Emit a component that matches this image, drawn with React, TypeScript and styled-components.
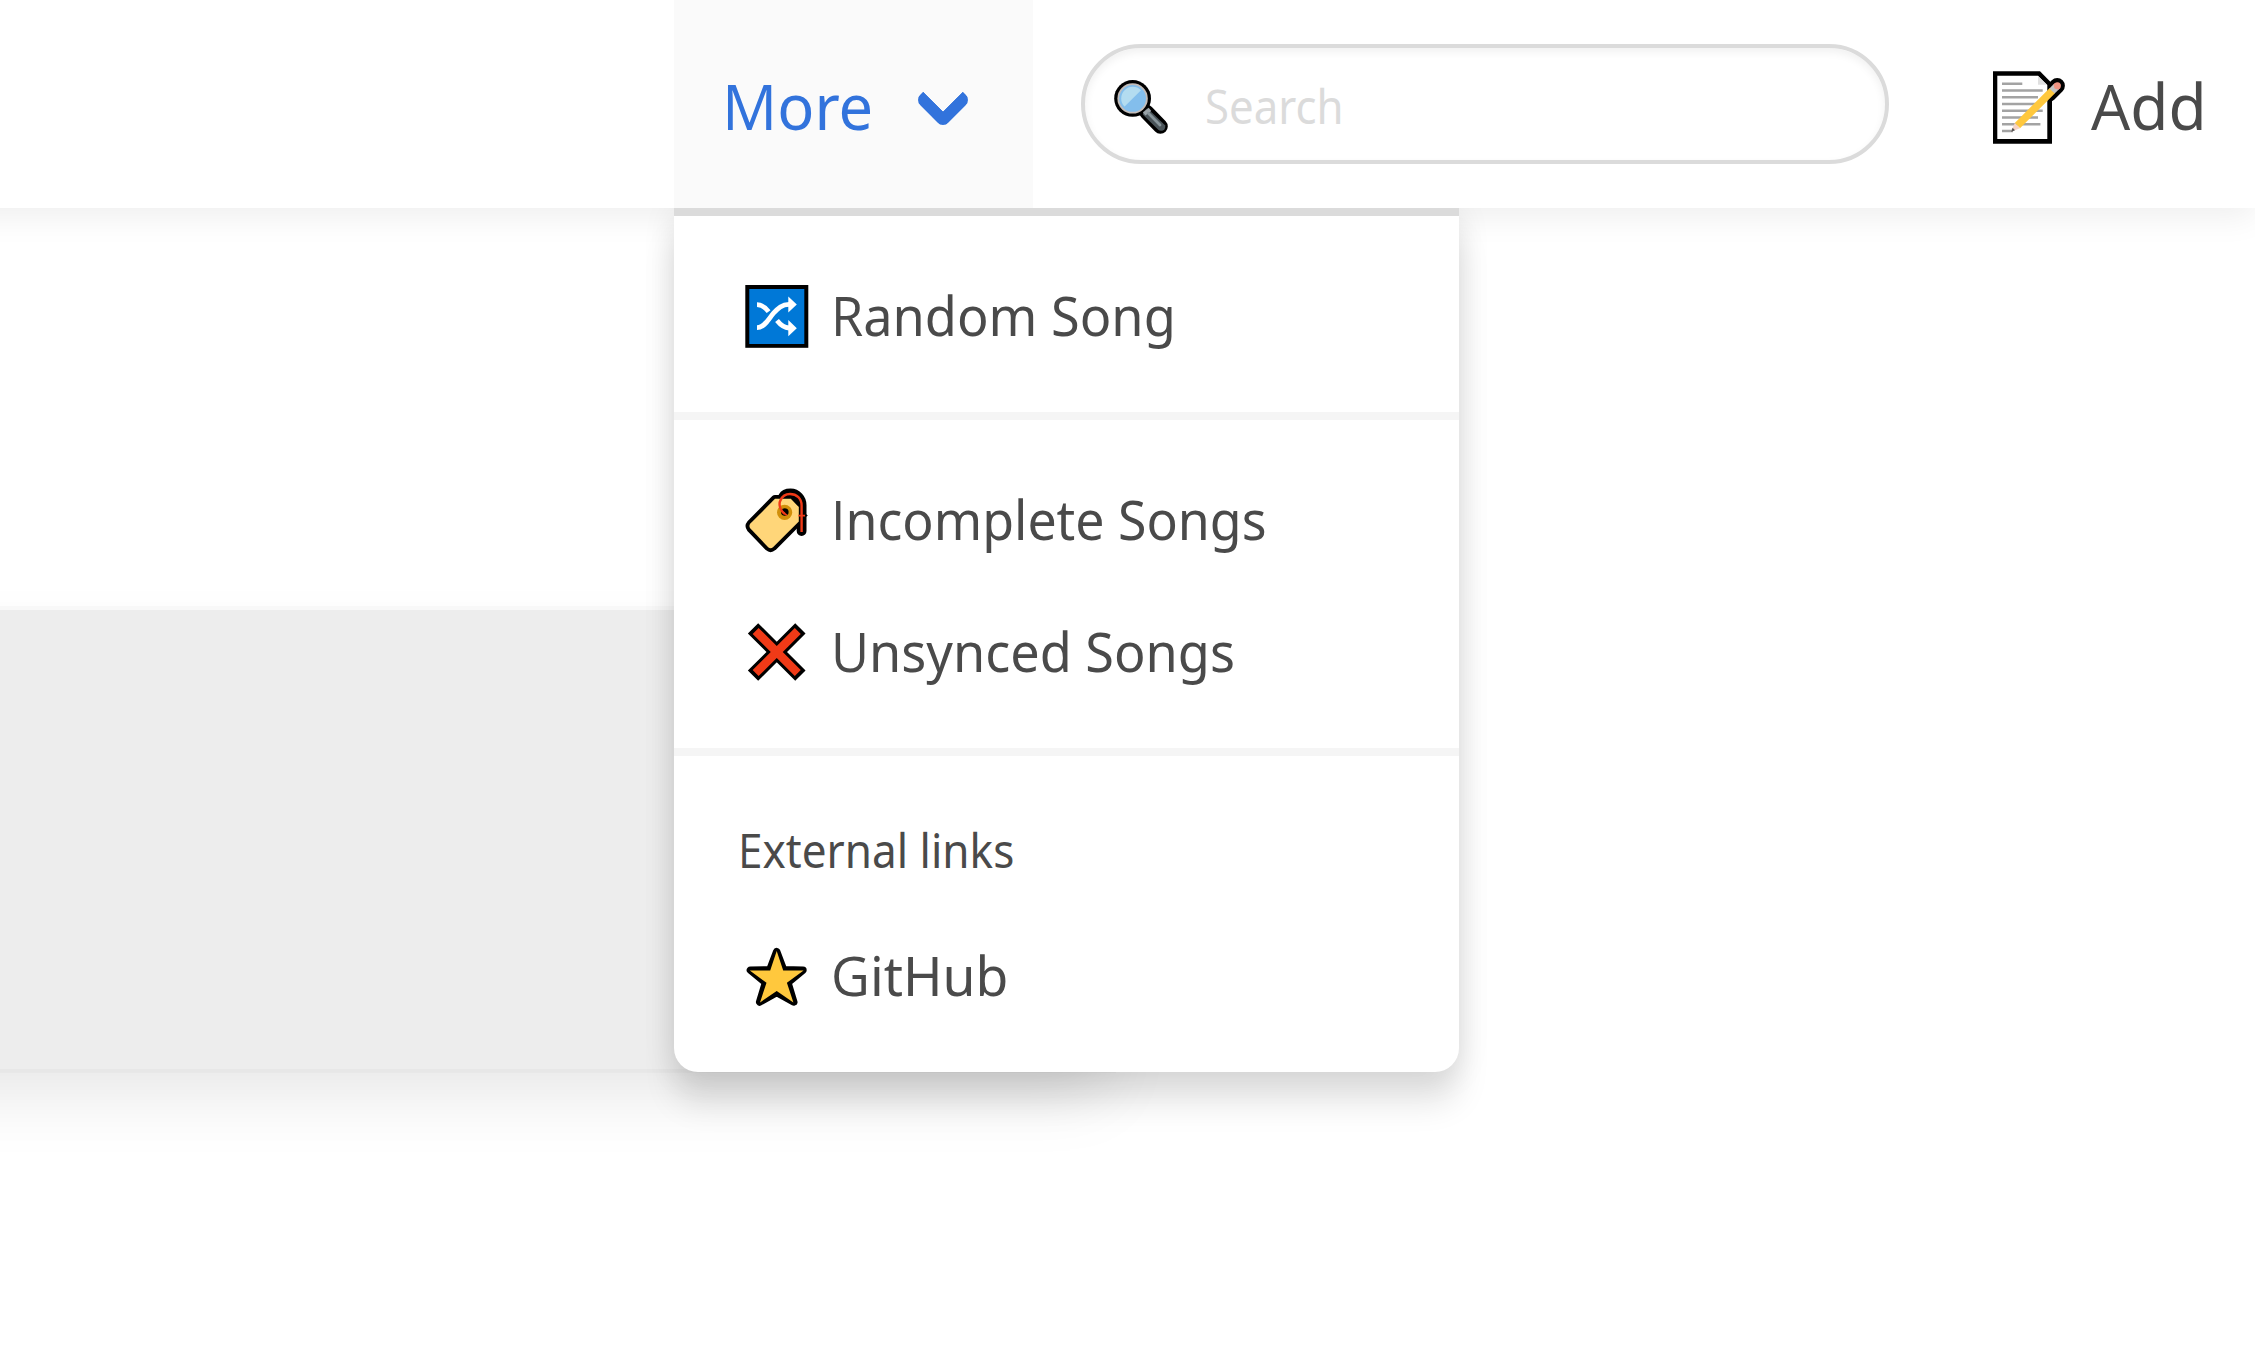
import React from "react";
import styled, { createGlobalStyle } from "styled-components";

const GlobalStyle = createGlobalStyle`
  *, *::before, *::after { box-sizing: border-box; }
  html, body { margin: 0; padding: 0; background: #fff; overflow: hidden; }
  body {
    color: #4a4a4a;
    font-family: "Noto Sans", "Open Sans", sans-serif;
    font-size: 63px;
  }
  svg { display: block; flex: none; }
`;

const Page = styled.div`
  display: flex;
  flex-direction: column;
  min-height: 1371px;
  overflow: hidden;
`;

const Navbar = styled.nav`
  position: relative;
  z-index: 2;
  display: flex;
  align-items: stretch;
  height: 208px;
  margin-left: -100px;
  padding-left: 774px;
  background: #fff;
  box-shadow: 0 8px 32px rgba(10, 10, 10, 0.07);
`;

const Text = styled.span<{ $size: number; $stretch: number; $drop?: number }>`
  display: inline-block;
  white-space: nowrap;
  font-size: ${(p) => p.$size}px;
  line-height: 1.3;
  padding-top: ${(p) => p.$drop ?? 2}px;
  transform: scaleX(${(p) => p.$stretch});
  transform-origin: left center;

  &::first-letter {
    font-family: "Open Sans", sans-serif;
  }
`;

const MoreLink = styled.div`
  position: relative;
  display: flex;
  align-items: center;
  justify-content: space-between;
  width: 358.6px;
  padding: 0 70px 0 48px;
  background: #fafafa;
  color: #3273dc;
`;

const Arrow = styled.span`
  width: 40px;
  height: 40px;
  margin-top: -8px;
  border: 12px solid #3273dc;
  border-top: 0;
  border-right: 0;
  border-radius: 8px;
  transform: rotate(-45deg);
`;

const Dropdown = styled.div`
  position: absolute;
  top: 100%;
  left: 0;
  width: 785px;
  padding: 32px 0;
  background: #fff;
  color: #4a4a4a;
  border-top: 8px solid #dbdbdb;
  border-radius: 0 0 24px 24px;
  box-shadow: 0 32px 32px rgba(10, 10, 10, 0.1), 0 4px 32px rgba(10, 10, 10, 0.1);
  clip-path: inset(0 -80px -120px -80px);
`;

const MenuItem = styled.div`
  display: flex;
  align-items: center;
  gap: 16px;
  height: 132px;
  padding: 0 64px;

  svg { margin-top: 5px; }
`;

const MenuHeading = styled(MenuItem)`
  height: 120px;
`;

const Divider = styled.hr`
  height: 8px;
  margin: 32px 0;
  border: 0;
  background: #f5f5f5;
`;

const SearchField = styled.div`
  display: flex;
  align-items: center;
  align-self: center;
  gap: 33.5px;
  width: 808px;
  height: 120px;
  margin-left: 48.4px;
  padding-left: 25px;
  border: 4px solid #dbdbdb;
  border-radius: 60px;
  box-shadow: inset 0 4px 8px rgba(10, 10, 10, 0.06);
  color: #dbdbdb;

  svg { margin-top: 6px; }
`;

const AddLink = styled.div`
  display: flex;
  align-items: center;
  gap: 18px;
  margin-left: 96px;

  svg { margin-top: 10px; }
`;

const Main = styled.main`
  padding-top: 402px;
`;

const Panel = styled.section`
  width: 1212px;
  height: 459px;
  margin-left: -100px;
  background: #ededed;
  box-shadow: 0 32px 64px -8px rgba(10, 10, 10, 0.1), 0 0 0 4px rgba(10, 10, 10, 0.02);
`;

const ShuffleIcon = () => (
  <svg width="77" height="77" viewBox="0 0 77 77">
    <rect x="7.3" y="7" width="63" height="62.8" fill="#000" />
    <rect x="11.3" y="11" width="55" height="55" fill="#0078d7" />
    <g fill="none" stroke="#fff" strokeWidth="4.8">
      <path d="M19 49.6C27 49.6 31 40 35.5 35.2C40 30.3 44 26.4 51 26.4" />
      <path d="M19 26.6C24 26.6 27.5 29.6 30.6 33.6" />
      <path d="M39 42.6C42 46.4 45.5 49.8 51 50" />
    </g>
    <path d="M50.3 18.5L58.8 26.4L50.3 34.5Z M50.3 42L58.8 50.2L50.3 58.2Z" fill="#fff" />
  </svg>
);

const TagIcon = () => (
  <svg width="77" height="77" viewBox="0 0 77 77">
    <path d="M46 29C42 14 46 11.4 52.5 11.4C59 11.4 63.6 17 63.6 23V49" fill="#000" stroke="#000" strokeWidth="9.8" strokeLinecap="round" />
    <path d="M64 29L69.8 33.4L64 38Z" fill="#000" />
    <path d="M37 16.8H53L60.8 24.6V39.4L35 65.2Q32.6 67.2 30.2 65.2L12.4 46.6Q10.4 44 12.4 41.6Z" fill="#000" stroke="#000" strokeWidth="7.6" strokeLinejoin="round" />
    <path d="M37 16.8H53L60.8 24.6V39.4L35 65.2Q32.6 67.2 30.2 65.2L12.4 46.6Q10.4 44 12.4 41.6Z" fill="#ffd679" />
    <path d="M53 16.8H56L60.8 21V25Z" fill="#000" />
    <circle cx="46.6" cy="30.4" r="7.6" fill="#d18f0a" />
    <circle cx="46.8" cy="30" r="3.8" fill="#000" />
    <path d="M46.8 32C41.6 28 40.6 22 42.4 18.4C44.4 13.8 47.8 12 52 12C58.8 12 63.6 16.6 63.6 23.4V50" fill="none" stroke="#f03a17" strokeWidth="2.4" />
    <path d="M44.5 30L49 33.4M60.4 33.6H67" fill="none" stroke="#f03a17" strokeWidth="1.8" />
  </svg>
);

const CrossIcon = () => (
  <svg width="77" height="77" viewBox="0 0 77 77">
    <g transform="translate(38.7 38) rotate(45)">
      <path d="M-33.5 -7.3H33.5V7.3H-33.5Z M-7.3 -33.5H7.3V33.5H-7.3Z" fill="#000" />
      <path d="M-29.8 -4.2H29.8V4.2H-29.8Z M-4.2 -29.8H4.2V29.8H-4.2Z" fill="#f03a17" />
    </g>
  </svg>
);

const StarIcon = () => (
  <svg width="77" height="77" viewBox="0 0 77 77">
    <path
      d="M38.7 13.6L45.6 31.8L65 32.2L49.9 44.6L55.8 64L38.7 54.4L21.6 64L27.5 44.6L12.4 32.2L31.8 31.8Z"
      fill="#000" stroke="#000" strokeWidth="7.4" strokeLinejoin="round"
    />
    <path d="M38.7 13L45.2 32.4L65.6 32.6L48.9 44.8L55.4 64.4L38.7 53L22 64.4L28.5 44.8L11.8 32.6L32.2 32.4Z" fill="#ffc83d" />
  </svg>
);

const MagnifierIcon = () => (
  <svg width="62" height="62" viewBox="0 0 62 62">
    <path d="M36.6 36.2L50.4 50.4" stroke="#000" strokeWidth="14.8" strokeLinecap="round" />
    <circle cx="22.6" cy="22.4" r="18.4" fill="#000" />
    <circle cx="22.6" cy="22.4" r="15.2" fill="#c4bdb9" />
    <circle cx="22.6" cy="22.4" r="13.4" fill="#83beec" />
    <path d="M14.6 30.6A11.2 11.2 0 0 1 31 14.2Z" fill="#b3dcf0" />
    <path d="M33.4 35.8L37.4 32.2L55 49.2Q56 52.4 53.4 54.2Q50.4 55.6 48 53.6L32.8 38.4Z" fill="#4a5459" />
    <path d="M34.2 38L40 33.4" stroke="#9aa3a7" strokeWidth="4" />
    <path d="M38.4 37.2L50 49" stroke="#87949a" strokeWidth="2.8" strokeLinecap="round" />
  </svg>
);

const MemoIcon = () => (
  <svg width="88" height="88" viewBox="0 0 88 88">
    <path d="M8 6.2H55L65.6 17L67 24V78.7H8Z" fill="#000" />
    <path d="M72.2 20.8L64 29" stroke="#000" strokeWidth="15.4" strokeLinecap="round" />
    <path d="M12.3 10.7H53L62.3 20V74H12.3Z" fill="#fff" />
    <path d="M53 11V19.8H61.8Z" fill="#e0e0e0" />
    <path
      d="M17 18.7H37.3M17 25.4H57.7M17 32.2H53M17 39H51M17 45.7H57.7M17 52.4H53M17 59.3H55.4M17 66H28"
      stroke="#a3a3a3" strokeWidth="2.5"
    />
    <path d="M67.4 25.6L32.4 60.6" stroke="#ffc83d" strokeWidth="7.4" />
    <path d="M71.4 21.6L67 26" stroke="#c4c4c4" strokeWidth="7.4" />
    <path d="M72.4 20.6L70.8 22.2" stroke="#f19483" strokeWidth="7.2" />
    <circle cx="72.4" cy="20.7" r="3.5" fill="#f19483" />
    <path d="M29.8 58L35 63.2L26 66.8Z" fill="#f6d3c6" />
    <path d="M27.6 62.8L30 65.2L26 67Z" fill="#555" />
  </svg>
);

export default function App() {
  return (
    <>
      <GlobalStyle />
      <Page>
        <Navbar>
          <MoreLink>
            <Text $size={63} $stretch={0.975} $drop={3}>More</Text>
            <Arrow />
            <Dropdown>
              <MenuItem>
                <ShuffleIcon />
                <Text $size={55} $stretch={0.95}>Random Song</Text>
              </MenuItem>
              <Divider />
              <MenuItem>
                <TagIcon />
                <Text $size={55} $stretch={0.942}>Incomplete Songs</Text>
              </MenuItem>
              <MenuItem>
                <CrossIcon />
                <Text $size={55} $stretch={0.949}>Unsynced Songs</Text>
              </MenuItem>
              <Divider />
              <MenuHeading>
                <Text $size={47.5} $stretch={0.928} $drop={3}>External links</Text>
              </MenuHeading>
              <MenuItem>
                <StarIcon />
                <Text $size={55} $stretch={0.972}>GitHub</Text>
              </MenuItem>
            </Dropdown>
          </MoreLink>
          <SearchField>
            <MagnifierIcon />
            <Text $size={47.5} $stretch={0.922} $drop={3}>Search</Text>
          </SearchField>
          <AddLink>
            <MemoIcon />
            <Text $size={63} $stretch={0.985} $drop={3}>Add</Text>
          </AddLink>
        </Navbar>
        <Main>
          <Panel />
        </Main>
      </Page>
    </>
  );
}
